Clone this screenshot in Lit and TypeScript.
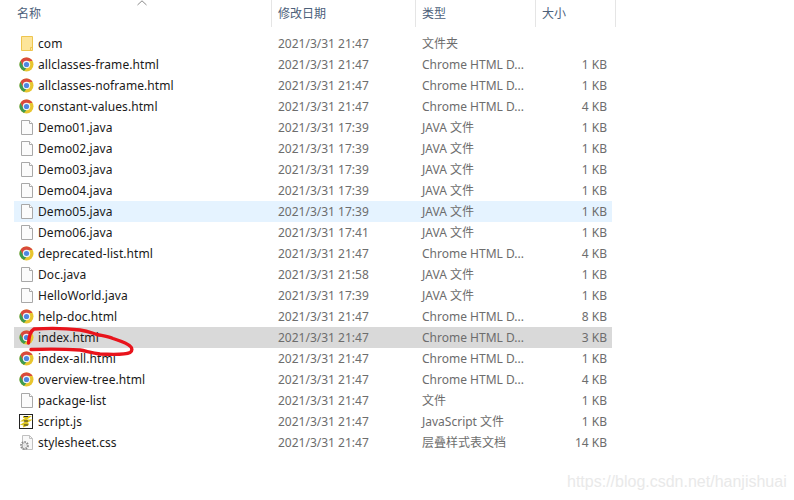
import { LitElement, html, css, svg } from "lit";
import { customElement } from "lit/decorators.js";

type Kind = "folder" | "chrome" | "file" | "js" | "css";
type Row = { name: string; date: string; type: string; size: string; kind: Kind; cls?: string };

const CH = "Chrome HTML D...";
const J = "JAVA 文件";
const rows: Row[] = [
  { name: "com", date: "2021/3/31 21:47", type: "文件夹", size: "", kind: "folder" },
  { name: "allclasses-frame.html", date: "2021/3/31 21:47", type: CH, size: "1 KB", kind: "chrome" },
  { name: "allclasses-noframe.html", date: "2021/3/31 21:47", type: CH, size: "1 KB", kind: "chrome" },
  { name: "constant-values.html", date: "2021/3/31 21:47", type: CH, size: "4 KB", kind: "chrome" },
  { name: "Demo01.java", date: "2021/3/31 17:39", type: J, size: "1 KB", kind: "file" },
  { name: "Demo02.java", date: "2021/3/31 17:39", type: J, size: "1 KB", kind: "file" },
  { name: "Demo03.java", date: "2021/3/31 17:39", type: J, size: "1 KB", kind: "file" },
  { name: "Demo04.java", date: "2021/3/31 17:39", type: J, size: "1 KB", kind: "file" },
  { name: "Demo05.java", date: "2021/3/31 17:39", type: J, size: "1 KB", kind: "file", cls: "hover" },
  { name: "Demo06.java", date: "2021/3/31 17:41", type: J, size: "1 KB", kind: "file" },
  { name: "deprecated-list.html", date: "2021/3/31 21:47", type: CH, size: "4 KB", kind: "chrome" },
  { name: "Doc.java", date: "2021/3/31 21:58", type: J, size: "1 KB", kind: "file" },
  { name: "HelloWorld.java", date: "2021/3/31 17:39", type: J, size: "1 KB", kind: "file" },
  { name: "help-doc.html", date: "2021/3/31 21:47", type: CH, size: "8 KB", kind: "chrome" },
  { name: "index.html", date: "2021/3/31 21:47", type: CH, size: "3 KB", kind: "chrome", cls: "selected" },
  { name: "index-all.html", date: "2021/3/31 21:47", type: CH, size: "1 KB", kind: "chrome" },
  { name: "overview-tree.html", date: "2021/3/31 21:47", type: CH, size: "4 KB", kind: "chrome" },
  { name: "package-list", date: "2021/3/31 21:47", type: "文件", size: "1 KB", kind: "file" },
  { name: "script.js", date: "2021/3/31 21:47", type: "JavaScript 文件", size: "1 KB", kind: "js" },
  { name: "stylesheet.css", date: "2021/3/31 21:47", type: "层叠样式表文档", size: "14 KB", kind: "css" },
];

const icons: Record<Kind, unknown> = {
  folder: svg`<path d="M3.500 1.500h11v14h-11z" fill="#fde59a" stroke="#eec54f"/><path d="M12.500 15.500v-3h2" fill="none" stroke="#eec54f"/>`,
  chrome: svg`<circle cx="8.500" cy="8.500" r="7" fill="#e8c52e"/>
    <path d="M8.500 1.500a7 7 0 0 1 6.100 3.500L8.500 5 5 10.500 2.500 4.900A7 7 0 0 1 8.500 1.500z" fill="#d9493c"/>
    <path d="M2.400 5 5.500 10.500l3 1.500L6 15A7 7 0 0 1 2.400 5z" fill="#3d9a50"/>
    <circle cx="8.500" cy="8.500" r="3.700" fill="#eef3fa"/><circle cx="8.500" cy="8.500" r="2.600" fill="#4f87e0"/>`,
  file: svg`<path d="M3.500 1.500h8l3 3v11h-11z" fill="#fbfbfb" stroke="#a8a8a8"/><path d="M11.500 1.500v3h3" fill="#fff" stroke="#a8a8a8"/>`,
  js: svg`<rect x="1.500" y="1.500" width="13" height="14" fill="#fff" stroke="#222"/><path d="M5 4h5.500L5.500 7.500h5.500L5.500 11h5L5 13.500" fill="none" stroke="#dcc51e" stroke-width="2.200"/><path d="M6 3.500h4M6 8h4M6 12h4" stroke="#2a2a2a" stroke-width="1"/>`,
  css: svg`<path d="M4.500 1.500h7l3 3v11h-10z" fill="#f8f8f8" stroke="#c0c0c0"/><path d="M11.500 1.500v3h3" fill="none" stroke="#c0c0c0"/><circle cx="6.500" cy="11.500" r="3.300" fill="none" stroke="#8a8a8a" stroke-width="2.200" stroke-dasharray="1.500 1"/><circle cx="6.500" cy="11.500" r="1.400" fill="#e4e4e4"/>`,
};

@customElement("app-root")
export class AppRoot extends LitElement {
  static styles = css`
    :host { display: block; position: relative; width: 794px; height: 500px; overflow: hidden; background: #fff;
      font-family: "Noto Sans", "Noto Sans CJK SC", sans-serif; font-size: 12px; line-height: 21px; color: #6d6d6d; }
    .head { display: grid; grid-template-columns: 272px 144px 120px 80px; width: 616px; height: 27px; position: relative; }
    .hc { padding-left: 6px; border-right: 1px solid #e5e5e5; color: #4c607a; line-height: 27px; }
    .hc.first { padding-left: 17px; }
    .sort { position: absolute; left: 137px; top: 0; }
    .list { padding-top: 6px; display: flex; flex-direction: column; }
    .row { display: grid; grid-template-columns: 257px 144px 120px 77px; width: 598px; height: 21px; margin-left: 14px; }
    .row.hover { background: #e5f3ff; }
    .row.selected { background: #d9d9d9; }
    .name { display: flex; align-items: center; gap: 3px; padding-left: 4px; color: #1a1a1a; white-space: nowrap; letter-spacing: 0.08px; }
    .name svg { flex: none; }
    .date { padding-left: 7px; }
    .type { padding-left: 7px; white-space: nowrap; }
    .size { text-align: right; padding-right: 5px; }
    .ink { position: absolute; left: 0; top: 0; pointer-events: none; }
    .mark { position: absolute; left: 567px; top: 472px; font-family: "Liberation Sans", sans-serif; font-size: 16px; line-height: 20px; color: #e9e9e9; white-space: nowrap; }
  `;

  render() {
    return html`
      <div class="head">
        <div class="hc first">名称</div><div class="hc">修改日期</div><div class="hc">类型</div><div class="hc">大小</div>
        <svg class="sort" width="10" height="6" viewBox="0 0 10 6"><path d="M.5 5 5 .8 9.500 5" fill="none" stroke="#8a8a8a"/></svg>
      </div>
      <div class="list">
        ${rows.map((r) => html`
          <div class="row ${r.cls ?? ""}">
            <div class="name"><svg width="17" height="17" viewBox="0 0 17 17">${icons[r.kind]}</svg><span>${r.name}</span></div>
            <div class="date">${r.date}</div>
            <div class="type">${r.type}</div>
            <div class="size">${r.size}</div>
          </div>`)}
      </div>
      <svg class="ink" width="794" height="500" viewBox="0 0 794 500">
        <path d="M28.500 343C29 336 30.500 331 34 329C50 328 68 328.500 80 330C88 331 92 333 97 334.500C104 336 108 336.500 113 338.500C120 341 127 343 130 346C132.500 348 132.500 351 130 352.500C126 354.500 110 354.500 100 354C92 353 86 351 80 350C64 349 46 349 31 349.500" fill="none" stroke="#e8141c" stroke-width="3.400" stroke-linecap="round" stroke-linejoin="round"/>
      </svg>
      <div class="mark">https://blog.csdn.net/hanjishuai</div>
    `;
  }
}
